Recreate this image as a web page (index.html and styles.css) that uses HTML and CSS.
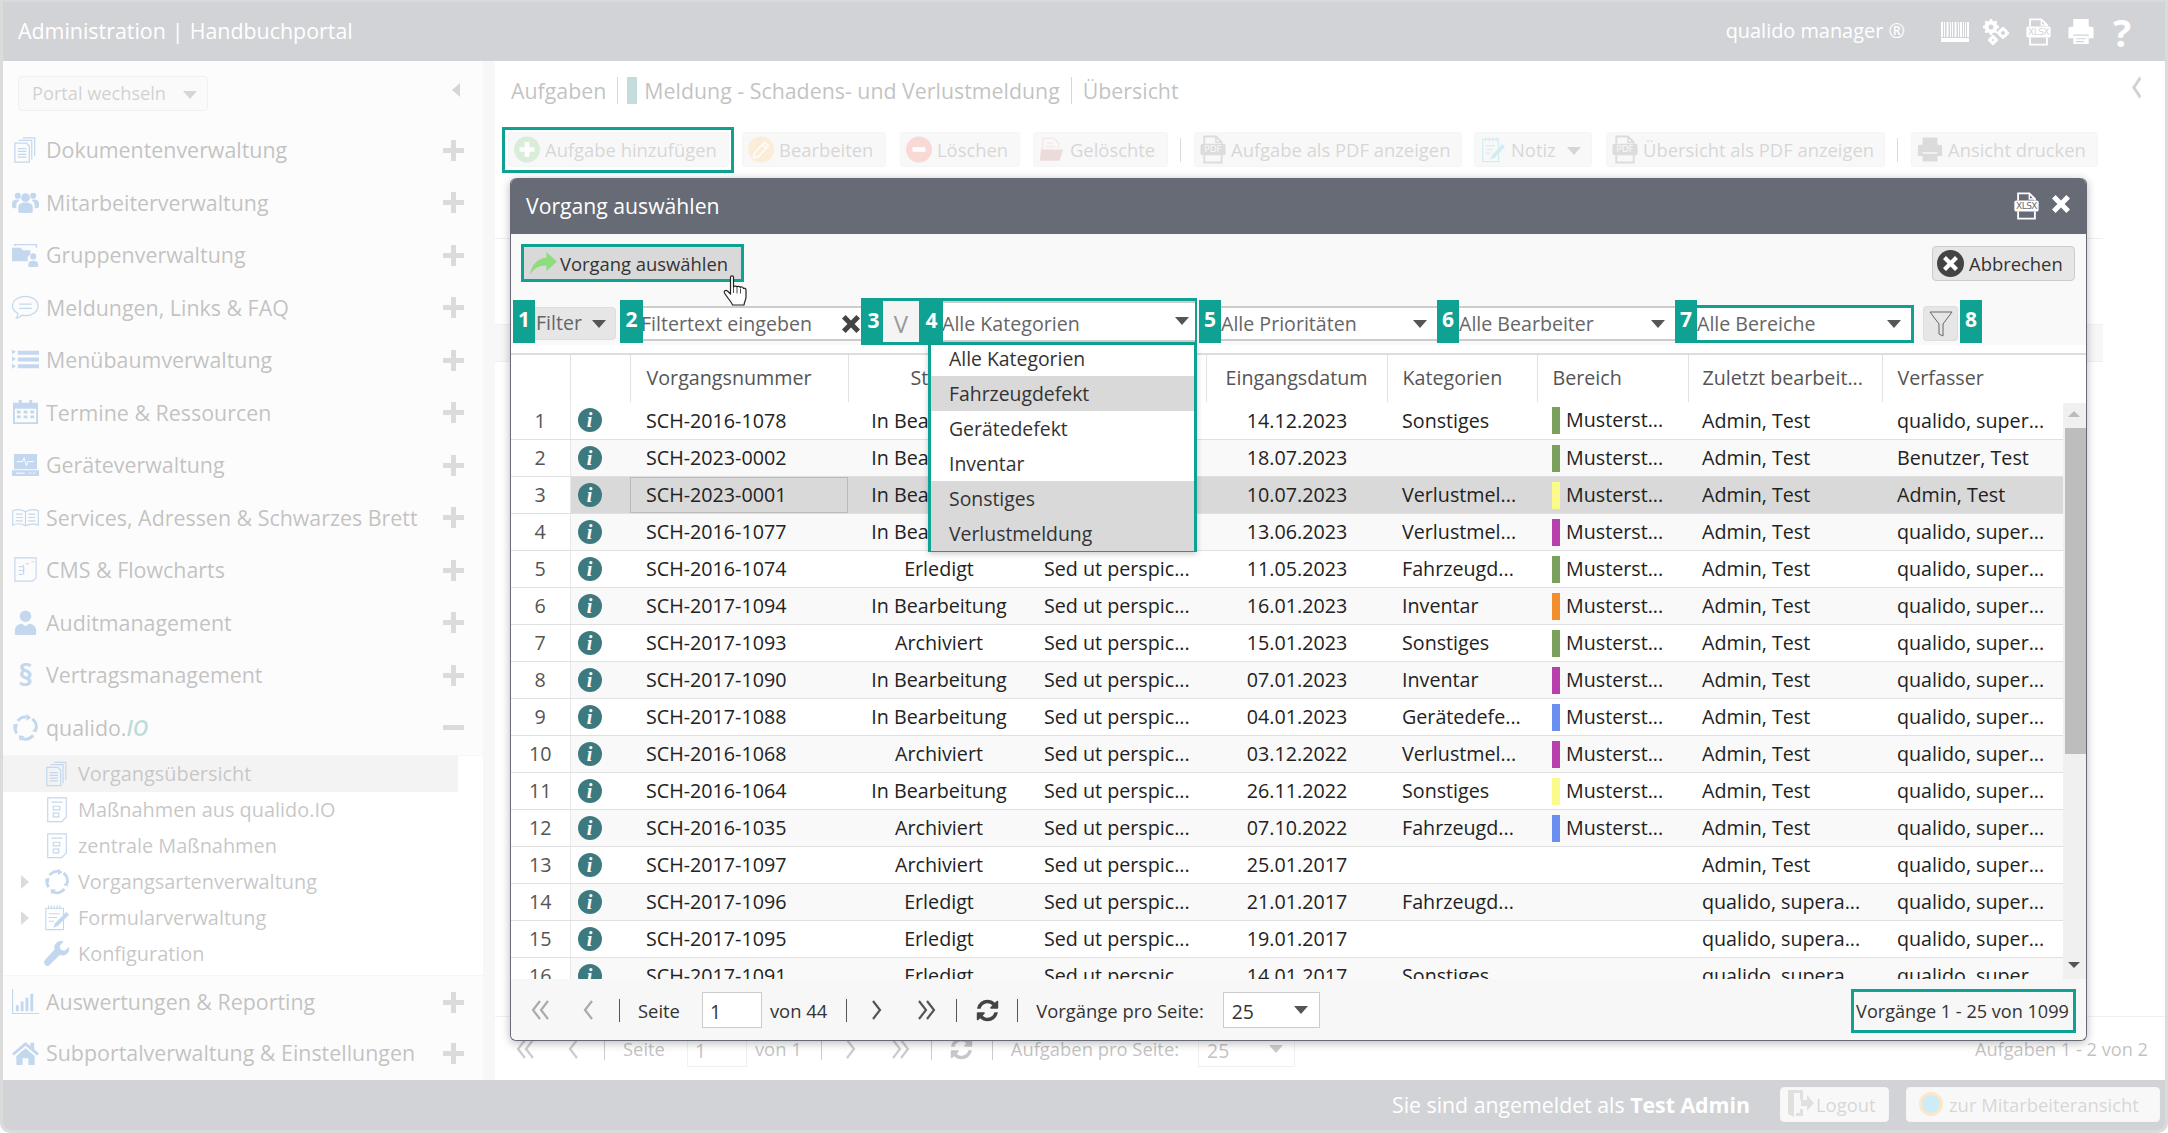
FILE: index.html
```html
<!DOCTYPE html>
<html lang="de">
<head>
<meta charset="utf-8">
<title>Vorgang auswählen</title>
<link rel="stylesheet" href="styles.css">
</head>
<body>
<svg class="defs" width="0" height="0" aria-hidden="true">
<defs>
<symbol id="i-docs" viewBox="0 0 28 28"><g fill="none" stroke="currentColor" stroke-width="1.3"><path d="M11 2h12.500v19"/><path d="M7 4.500h13.500v20"/><path d="M3 7.500h12l3 3v16.500H3z"/><path d="M6 13h9M6 16h9M6 19h9M6 22h9"/></g></symbol>
<symbol id="i-users" viewBox="0 0 28 28"><g fill="currentColor"><circle cx="14" cy="9" r="4.500"/><circle cx="6" cy="7" r="3.200"/><circle cx="22" cy="7" r="3.200"/><path d="M6.500 24v-5c0-3.500 3-5 7.500-5s7.500 1.500 7.500 5v5c-3 1.300-12 1.300-15 0z"/><path d="M0 19v-4c0-2.500 2-4 5.500-4 1 0 1.500.3 2 1-2 1-3 3-3 5v3c-2 0-3.500-.3-4.500-1zM28 19v-4c0-2.500-2-4-5.500-4-1 0-1.500.3-2 1 2 1 3 3 3 5v3c2 0 3.500-.3 4.500-1z"/></g></symbol>
<symbol id="i-group" viewBox="0 0 28 28"><path fill="currentColor" d="M0 7h9l2 2.500h8V14c-3 1-3.500 5-2 7H0zM2 5V3h24v4h-1.500V4.500H4V5z"/><circle cx="22" cy="16" r="3.200" fill="currentColor"/><path fill="currentColor" d="M17 27v-3c0-2.500 2-3.500 5-3.500s5 1 5 3.500v3z"/></symbol>
<symbol id="i-chat" viewBox="0 0 28 28"><g fill="none" stroke="currentColor" stroke-width="1.300"><path d="M14 2.500c7 0 13 4 13 10s-6 10-13 10c-1.500 0-3-.2-4-.5-1.500 1.500-3.500 3-5.500 3 1-1.500 1.500-3 1.500-5-3.500-1.800-5.500-4.500-5.500-7.500 0-6 6-10 13.500-10z"/><path d="M7.500 10.500h13M7.500 15h13"/></g></symbol>
<symbol id="i-list" viewBox="0 0 28 28"><path fill="currentColor" d="M6 5h22v4H6zM6 12h22v4H6zM6 19h22v4H6zM0 3.500l4 2.500-4 2.500zM0 11l4 2.500L0 16zM0 18.500l4 2.500-4 2.500z"/></symbol>
<symbol id="i-cal" viewBox="0 0 28 28"><path fill="currentColor" d="M1 4h26v22H1zM3 10v14h22V10z"/><path fill="currentColor" d="M7 1h3v5H7zM18 1h3v5h-3zM5 12h4v3H5zM12 12h4v3h-4zM19 12h4v3h-4zM5 17h4v3H5zM12 17h4v3h-4zM19 17h4v3h-4z"/></symbol>
<symbol id="i-monitor" viewBox="0 0 28 28"><path fill="currentColor" d="M2 3h24v16H2zM0 20h28v6H0z"/><path fill="none" stroke="#fff" stroke-width="1" d="M5 11h6l1.500-4 2.500 8 1.500-4h6M4 23h9M18 23h2M22 23h2"/></symbol>
<symbol id="i-book" viewBox="0 0 28 28"><g fill="none" stroke="currentColor" stroke-width="1.200"><path d="M.7 7c4-1.500 9-1.500 13.300 1 4.300-2.500 9.300-2.500 13.300-1v15c-4-1.500-9-1.500-13.300.5C9.700 20 4.700 20 .7 22zM14 8v14.500"/><path d="M4 10.500h7M4 14h7M4 17.500h7M17 10.500h7M17 14h7M17 17.500h7"/></g></symbol>
<symbol id="i-flow" viewBox="0 0 28 28"><g fill="none" stroke="currentColor" stroke-width="1.200"><path d="M3 2h22v21l-4 3H3z"/><path d="M7 11h4M7 15h6M7 19h4M14 8h4M20 6h3M12 9v10"/></g></symbol>
<symbol id="i-person" viewBox="0 0 28 28"><circle cx="14" cy="7.500" r="6" fill="currentColor"/><path fill="currentColor" d="M3 27v-5c0-4 3-6 7-7l4 3 4-3c4 1 7 3 7 7v5z"/></symbol>
<symbol id="i-cycle" viewBox="0 0 28 28"><g fill="none" stroke="currentColor" stroke-width="3"><path d="M6 7A11 11 0 0 1 15 3M21 5a11 11 0 0 1 4 11M22 22a11 11 0 0 1-12 3.500M5 20a11 11 0 0 1-2-8"/></g><path fill="currentColor" d="M15 0l5 4-5 3zM26 19l-5-1 4-5zM8 28l-1-6 6 1zM1 11l5-1-1 6z"/></symbol>
<symbol id="i-check" viewBox="0 0 28 28"><g fill="none" stroke="currentColor" stroke-width="1.300"><path d="M4 1.500h20V22l-5 5H4z"/><path d="M8 6h12M10 10.500h7v4h-7zM10 18h6v4h-6z"/></g></symbol>
<symbol id="i-form" viewBox="0 0 28 28"><g fill="none" stroke="currentColor" stroke-width="1.200"><path d="M2 4h19v23H2z"/><path d="M5 1v4M8 1v4M11 1v4M14 1v4M17 1v4M5 10h12M5 14h9M5 18h6"/></g><path fill="currentColor" d="M24 8l3 3-12 12-5 2 2-5z"/></symbol>
<symbol id="i-wrench" viewBox="0 0 28 28"><path fill="currentColor" d="M27 7l-5 4-4-1-1-4 4-5c-4-1.500-8 .5-9.500 4-.6 1.500-.6 3 0 4.500L1 21c-1.500 1.500-1 3.500 0 5s3.500 2 5 .5l11-11c4 1.500 8 0 9.500-3.500.6-1.500.8-3.500.5-5z"/></symbol>
<symbol id="i-chart" viewBox="0 0 28 28"><path fill="currentColor" d="M0 1h1.200v24.800H28V27H0zM4 18h3v6H4zM9 14h3v10H9zM14 10h3v14h-3zM19 6h3v18h-3z"/></symbol>
<symbol id="i-home" viewBox="0 0 28 28"><path fill="currentColor" d="M14 3L0 15l2 2L14 7l12 10 2-2-5-4.300V4h-4v3.300zM4.500 17.500L14 9.500l9.500 8V27H17v-7h-6v7H4.500z"/></symbol>
<symbol id="i-barcode" viewBox="0 0 28 20"><path fill="currentColor" d="M0 0h2v15H0zM3 0h1v15H3zM5.500 0h2v15h-2zM9 0h1v15H9zM11 0h1v15h-1zM13.500 0h2v15h-2zM17 0h1v15h-1zM19 0h2v15h-2zM22 0h1v15h-1zM24 0h1v15h-1zM26 0h2v15h-2zM0 16h28v4H0z"/></symbol>
<symbol id="i-gears" viewBox="0 0 28 26"><g fill="none" stroke="currentColor"><circle cx="9" cy="8" r="4.500" stroke-width="4"/><circle cx="21" cy="14" r="3.500" stroke-width="3"/><circle cx="11" cy="21" r="2.500" stroke-width="3"/><path stroke-width="2.500" d="M9 0v3M9 13v3M1 8h3M14 8h3M3.300 2.300l2 2M12.700 11.700l2 2M3.300 13.700l2-2M12.700 4.300l2-2M21 8v2M21 18v2M15 14h2M25 14h2M11 16v1M11 25v1M6 21h1M15 21h1"/></g></symbol>
<symbol id="i-file" viewBox="0 0 26 30"><path fill="none" stroke="currentColor" stroke-width="2" d="M4 9V1.500h12L22 7.500V9M4 21v7.500h18V21"/><path fill="none" stroke="currentColor" stroke-width="1.500" d="M16 1.500v6h6"/><rect x="0" y="9" width="26" height="12" rx="2" fill="currentColor"/></symbol>
<symbol id="i-printer" viewBox="0 0 28 28"><path fill="currentColor" d="M6 1h16v8H6zM1 11c0-1 1-2 2-2h22c1 0 2 1 2 2v10h-5v-4H6v4H1z"/><path fill="currentColor" d="M6 18.500h16V27H6z"/><path fill="none" stroke="#666b75" stroke-width="1.200" d="M9 21.500h10M9 24.500h8"/></symbol>
<symbol id="i-xbtn" viewBox="0 0 20 20"><path fill="currentColor" d="M0 4l4-4 6 6 6-6 4 4-6 6 6 6-4 4-6-6-6 6-4-4 6-6z"/></symbol>
<symbol id="i-refresh" viewBox="0 0 1792 1792"><path fill="currentColor" d="M1639 1056q0 5-1 7-64 268-268 434.500t-478 166.500q-146 0-282.500-55t-243.500-157l-129 129q-19 19-45 19t-45-19-19-45v-448q0-26 19-45t45-19h448q26 0 45 19t19 45-19 45l-137 137q71 66 161 102t187 36q134 0 250-65t186-179q11-17 53-117 8-23 30-23h192q13 0 22.500 9.500t9.500 22.500zm25-800v448q0 26-19 45t-45 19h-448q-26 0-45-19t-19-45 19-45l138-138q-148-137-349-137-134 0-250 65t-186 179q-11 17-53 117-8 23-30 23h-199q-13 0-22.500-9.500t-9.500-22.500v-7q65-268 270-434.500t480-166.500q146 0 284 55.500t245 156.500l130-129q19-19 45-19t45 19 19 45z"/></symbol>
<symbol id="i-funnel" viewBox="0 0 24 28"><path fill="none" stroke="currentColor" stroke-width="1" d="M1 2h22L14 14v12l-4-2V14z"/></symbol>
<symbol id="i-dbl-l" viewBox="0 0 22 22"><path fill="none" stroke="currentColor" stroke-width="2.200" d="M10 2L3 11l7 9M18 2l-7 9 7 9"/></symbol>
<symbol id="i-l" viewBox="0 0 14 22"><path fill="none" stroke="currentColor" stroke-width="2.200" d="M11 2L4 11l7 9"/></symbol>
<symbol id="i-r" viewBox="0 0 14 22"><path fill="none" stroke="currentColor" stroke-width="2.200" d="M3 2l7 9-7 9"/></symbol>
<symbol id="i-dbl-r" viewBox="0 0 22 22"><path fill="none" stroke="currentColor" stroke-width="2.200" d="M4 2l7 9-7 9M12 2l7 9-7 9"/></symbol>
<symbol id="i-plusc" viewBox="0 0 28 28"><circle cx="14" cy="14" r="14" fill="#5cb85c"/><path fill="#fff" d="M11.500 6h5v5.500H22v5h-5.500V22h-5v-5.500H6v-5h5.500z"/></symbol>
<symbol id="i-pencil" viewBox="0 0 28 28"><circle cx="14" cy="14" r="14" fill="#f7b55a"/><path fill="none" stroke="#fff" stroke-width="1.800" d="M18 6l4 4-11 12-5 1 1-5zM16 9l4 4"/></symbol>
<symbol id="i-minus" viewBox="0 0 28 28"><circle cx="14" cy="14" r="14" fill="#ee5f4f"/><rect x="7" y="11.500" width="14" height="5" fill="#fff"/></symbol>
<symbol id="i-trash" viewBox="0 0 28 28"><path fill="none" stroke="#c9a0a0" stroke-width="1.300" d="M4 23V2h12l5 5v5M8 7h7M8 11h9"/><path fill="#b06a5f" d="M2 14h24l-4 12H1z"/></symbol>
<symbol id="i-note" viewBox="0 0 28 28"><g fill="none" stroke="#38b6c4" stroke-width="1.300"><path d="M3 3h17v24H3zM6 1v4M10 1v4M14 1v4M18 1v4M6 10h10M6 14h8M6 18h5"/></g><path fill="#38b6c4" d="M24 8l3 3-11 12-5 2 2-5z"/></symbol>
<symbol id="i-print2" viewBox="0 0 28 28"><path fill="#666" d="M6 1h16v8H6zM1 11c0-1 1-2 2-2h22c1 0 2 1 2 2v10h-5v-4H6v4H1zM6 18.500h16V27H6z"/></symbol>
<symbol id="i-send" viewBox="0 0 28 24"><path fill="#8fdc7f" d="M17 0l11 10-11 10v-6C9 14 4 17 0 24c1-10 7-17 17-18z"/></symbol>
<symbol id="i-logout" viewBox="0 0 28 30"><path fill="#777" d="M2 1h15v10h-3V4H9l-1 0v24l-6-3zM17 20v7H10v-3h4v-4z"/><path fill="#777" d="M15 11h6V6l7 8-7 8v-5h-6z"/></symbol>
</defs>
</svg>

<div class="app">
  <header class="topbar">
    <div class="topbar-title">Administration | Handbuchportal</div>
    <div class="topbar-right">
      <span class="brand">qualido manager ®</span>
      <svg class="ti ti-barcode"><use href="#i-barcode"/></svg>
      <svg class="ti ti-gears"><use href="#i-gears"/></svg>
      <span class="fileicon fileicon-top"><svg><use href="#i-file"/></svg><b>XLSX</b></span>
      <svg class="ti ti-printer"><use href="#i-printer"/></svg>
      <span class="help">?</span>
    </div>
  </header>

  <div class="main">
    <aside class="sidebar">
      <div class="side-top">
        <div class="portal">Portal wechseln<i class="caret caret-light"></i></div>
        <i class="collapse-left"></i>
      </div>
      <div class="nav"><svg class="nav-ic"><use href="#i-docs"/></svg><span>Dokumentenverwaltung</span><i class="plus"></i></div>
      <div class="nav"><svg class="nav-ic"><use href="#i-users"/></svg><span>Mitarbeiterverwaltung</span><i class="plus"></i></div>
      <div class="nav"><svg class="nav-ic"><use href="#i-group"/></svg><span>Gruppenverwaltung</span><i class="plus"></i></div>
      <div class="nav"><svg class="nav-ic"><use href="#i-chat"/></svg><span>Meldungen, Links &amp; FAQ</span><i class="plus"></i></div>
      <div class="nav"><svg class="nav-ic"><use href="#i-list"/></svg><span>Menübaumverwaltung</span><i class="plus"></i></div>
      <div class="nav"><svg class="nav-ic"><use href="#i-cal"/></svg><span>Termine &amp; Ressourcen</span><i class="plus"></i></div>
      <div class="nav"><svg class="nav-ic"><use href="#i-monitor"/></svg><span>Geräteverwaltung</span><i class="plus"></i></div>
      <div class="nav"><svg class="nav-ic"><use href="#i-book"/></svg><span>Services, Adressen &amp; Schwarzes Brett</span><i class="plus"></i></div>
      <div class="nav"><svg class="nav-ic"><use href="#i-flow"/></svg><span>CMS &amp; Flowcharts</span><i class="plus"></i></div>
      <div class="nav"><svg class="nav-ic"><use href="#i-person"/></svg><span>Auditmanagement</span><i class="plus"></i></div>
      <div class="nav"><b class="nav-ic nav-para">§</b><span>Vertragsmanagement</span><i class="plus"></i></div>
      <div class="nav nav-open"><svg class="nav-ic"><use href="#i-cycle"/></svg><span>qualido.<em>IO</em></span><i class="plus plus-minus"></i></div>
      <div class="subnav">
        <div class="sub sub-active"><svg class="sub-ic"><use href="#i-docs"/></svg><span>Vorgangsübersicht</span></div>
        <div class="sub"><svg class="sub-ic"><use href="#i-check"/></svg><span>Maßnahmen aus qualido.IO</span></div>
        <div class="sub"><svg class="sub-ic"><use href="#i-check"/></svg><span>zentrale Maßnahmen</span></div>
        <div class="sub"><i class="tree-arrow"></i><svg class="sub-ic"><use href="#i-cycle"/></svg><span>Vorgangsartenverwaltung</span></div>
        <div class="sub"><i class="tree-arrow"></i><svg class="sub-ic"><use href="#i-form"/></svg><span>Formularverwaltung</span></div>
        <div class="sub"><svg class="sub-ic"><use href="#i-wrench"/></svg><span>Konfiguration</span></div>
      </div>
      <div class="nav nav-lower"><svg class="nav-ic"><use href="#i-chart"/></svg><span>Auswertungen &amp; Reporting</span><i class="plus"></i></div>
      <div class="nav nav-lower"><svg class="nav-ic"><use href="#i-home"/></svg><span>Subportalverwaltung &amp; Einstellungen</span><i class="plus"></i></div>
    </aside>

    <section class="content">
      <div class="crumbs">
        <span>Aufgaben</span><i class="crumb-sep"></i><i class="crumb-swatch"></i><span>Meldung - Schadens- und Verlustmeldung</span><i class="crumb-sep"></i><span>Übersicht</span>
        <i class="collapse-right"></i>
      </div>
      <div class="toolbar">
        <div class="tb tb-add"><svg class="tb-ic"><use href="#i-plusc"/></svg>Aufgabe hinzufügen</div>
        <div class="tb tb-edit"><svg class="tb-ic"><use href="#i-pencil"/></svg>Bearbeiten</div>
        <div class="tb tb-del"><svg class="tb-ic"><use href="#i-minus"/></svg>Löschen</div>
        <div class="tb tb-trash"><svg class="tb-ic"><use href="#i-trash"/></svg>Gelöschte</div>
        <i class="tb-sep"></i>
        <div class="tb tb-pdf1"><span class="fileicon fileicon-pdf"><svg><use href="#i-file"/></svg><b>PDF</b></span>Aufgabe als PDF anzeigen</div>
        <div class="tb tb-note"><svg class="tb-ic"><use href="#i-note"/></svg>Notiz<i class="caret caret-light caret-note"></i></div>
        <div class="tb tb-pdf2"><span class="fileicon fileicon-pdf"><svg><use href="#i-file"/></svg><b>PDF</b></span>Übersicht als PDF anzeigen</div>
        <i class="tb-sep"></i>
        <div class="tb tb-print"><svg class="tb-ic"><use href="#i-print2"/></svg>Ansicht drucken</div>
      </div>
      <div class="bgpanel">
        <div class="bg-r1"></div>
        <div class="bg-r2"></div>
        <div class="bg-r3"></div>
      </div>
      <div class="pager pager-bg">
        <span class="slot s47"><svg class="pi"><use href="#i-dbl-l"/></svg></span>
        <span class="slot s47"><svg class="pi pi-n"><use href="#i-l"/></svg></span>
        <i class="sep sep-a"></i><span>Seite</span><span class="pg-input">1</span><span class="von">von 1</span>
        <i class="sep sep-b"></i>
        <span class="slot s49"><svg class="pi pi-n"><use href="#i-r"/></svg></span>
        <span class="slot s49"><svg class="pi"><use href="#i-dbl-r"/></svg></span>
        <i class="sep sep-c"></i>
        <span class="slot s60"><svg class="pi-ref"><use href="#i-refresh"/></svg></span>
        <i class="sep sep-d"></i>
        <span>Aufgaben pro Seite:</span><span class="pg-sel">25<i class="caret"></i></span>
        <span class="pg-total">Aufgaben 1 - 2 von 2</span>
      </div>
    </section>
  </div>

  <footer class="footbar">
    <span class="who">Sie sind angemeldet als <b>Test Admin</b></span>
    <div class="fbtn fbtn-logout"><svg class="fb-ic"><use href="#i-logout"/></svg>Logout</div>
    <div class="fbtn fbtn-emp"><i class="ring"></i>zur Mitarbeiteransicht</div>
  </footer>
</div>

<div class="dim"></div>
<div class="mark mark-add"></div>

<div class="modal">
  <div class="m-head">
    <span class="m-title">Vorgang auswählen</span>
    <span class="fileicon fileicon-modal"><svg><use href="#i-file"/></svg><b>XLSX</b></span>
    <svg class="m-close"><use href="#i-xbtn"/></svg>
  </div>
  <div class="m-tools">
    <div class="btn-pick"><svg class="pick-ic"><use href="#i-send"/></svg>Vorgang auswählen</div>
    <div class="btn-cancel"><span class="cancel-ic"><svg><use href="#i-xbtn"/></svg></span>Abbrechen</div>
  </div>
  <div class="m-filter">
    <span class="num">1</span>
    <div class="f-btn">Filter<i class="caret"></i></div>
    <span class="num num-2">2</span>
    <div class="f-input">Filtertext eingeben<svg class="f-x"><use href="#i-xbtn"/></svg></div>
    <div class="f-group">
      <span class="num num-in">3</span>
      <div class="f-v">V</div>
      <span class="num num-in num-4">4</span>
      <div class="f-sel f-sel-in">Alle Kategorien<i class="caret"></i></div>
    </div>
    <span class="num num-5">5</span>
    <div class="f-sel f-216">Alle Prioritäten<i class="caret"></i></div>
    <span class="num">6</span>
    <div class="f-sel f-216">Alle Bearbeiter<i class="caret"></i></div>
    <span class="num">7</span>
    <div class="f-sel f-mark">Alle Bereiche<i class="caret"></i></div>
    <div class="f-funnel"><svg><use href="#i-funnel"/></svg></div>
    <span class="num num-8">8</span>
    <ul class="dropdown">
      <li>Alle Kategorien</li>
      <li class="on">Fahrzeugdefekt</li>
      <li>Gerätedefekt</li>
      <li>Inventar</li>
      <li class="on">Sonstiges</li>
      <li class="on">Verlustmeldung</li>
    </ul>
    <svg class="cursor" viewBox="0 0 26 32"><path fill="#fff" stroke="#222" stroke-width="1.200" stroke-linejoin="round" d="M8 2c0-1.500 3-1.500 3 0v10c0-1 3-1.500 3.500 0 .3-1 3-1 3.300.5.500-.8 3-.8 3.200 1 .500-.5 2.500-.3 2.500 1.500v7c0 3-1.500 4-2 8H10c-1-3-5-7-8-12-1-2 1-3.500 3-2l3 3z"/><path fill="none" stroke="#222" stroke-width=".8" d="M11 12v6M14.500 12.500v6M18 13.500v5"/></svg>
  </div>
  <div class="m-table">
    <div class="t-scroll">
      <table class="grid">
        <colgroup><col class="w59"><col class="w60"><col class="w218"><col class="w185"><col class="w173"><col class="w181"><col class="w150"><col class="w151"><col class="w194"><col class="w181"></colgroup>
        <thead><tr><th></th><th></th><th>Vorgangsnummer</th><th class="ctr">Status</th><th>Betreff</th><th class="ctr">Eingangsdatum</th><th>Kategorien</th><th>Bereich</th><th>Zuletzt bearbeit...</th><th>Verfasser</th></tr></thead>
        <tbody>
<tr><td>1</td><td><i class="info">i</i></td><td>SCH-2016-1078</td><td>In Bearbeitung</td><td>Sed ut perspic...</td><td>14.12.2023</td><td>Sonstiges</td><td><i class="bar b-green"></i>Musterst...</td><td>Admin, Test</td><td>qualido, super...</td></tr>
<tr><td>2</td><td><i class="info">i</i></td><td>SCH-2023-0002</td><td>In Bearbeitung</td><td>Sed ut perspic...</td><td>18.07.2023</td><td></td><td><i class="bar b-green"></i>Musterst...</td><td>Admin, Test</td><td>Benutzer, Test</td></tr>
<tr class="sel"><td>3</td><td><i class="info">i</i></td><td class="cellfocus">SCH-2023-0001</td><td>In Bearbeitung</td><td>Sed ut perspic...</td><td>10.07.2023</td><td>Verlustmel...</td><td><i class="bar b-yellow"></i>Musterst...</td><td>Admin, Test</td><td>Admin, Test</td></tr>
<tr><td>4</td><td><i class="info">i</i></td><td>SCH-2016-1077</td><td>In Bearbeitung</td><td>Sed ut perspic...</td><td>13.06.2023</td><td>Verlustmel...</td><td><i class="bar b-purple"></i>Musterst...</td><td>Admin, Test</td><td>qualido, super...</td></tr>
<tr><td>5</td><td><i class="info">i</i></td><td>SCH-2016-1074</td><td>Erledigt</td><td>Sed ut perspic...</td><td>11.05.2023</td><td>Fahrzeugd...</td><td><i class="bar b-green"></i>Musterst...</td><td>Admin, Test</td><td>qualido, super...</td></tr>
<tr><td>6</td><td><i class="info">i</i></td><td>SCH-2017-1094</td><td>In Bearbeitung</td><td>Sed ut perspic...</td><td>16.01.2023</td><td>Inventar</td><td><i class="bar b-orange"></i>Musterst...</td><td>Admin, Test</td><td>qualido, super...</td></tr>
<tr><td>7</td><td><i class="info">i</i></td><td>SCH-2017-1093</td><td>Archiviert</td><td>Sed ut perspic...</td><td>15.01.2023</td><td>Sonstiges</td><td><i class="bar b-green"></i>Musterst...</td><td>Admin, Test</td><td>qualido, super...</td></tr>
<tr><td>8</td><td><i class="info">i</i></td><td>SCH-2017-1090</td><td>In Bearbeitung</td><td>Sed ut perspic...</td><td>07.01.2023</td><td>Inventar</td><td><i class="bar b-purple"></i>Musterst...</td><td>Admin, Test</td><td>qualido, super...</td></tr>
<tr><td>9</td><td><i class="info">i</i></td><td>SCH-2017-1088</td><td>In Bearbeitung</td><td>Sed ut perspic...</td><td>04.01.2023</td><td>Gerätedefe...</td><td><i class="bar b-blue"></i>Musterst...</td><td>Admin, Test</td><td>qualido, super...</td></tr>
<tr><td>10</td><td><i class="info">i</i></td><td>SCH-2016-1068</td><td>Archiviert</td><td>Sed ut perspic...</td><td>03.12.2022</td><td>Verlustmel...</td><td><i class="bar b-purple"></i>Musterst...</td><td>Admin, Test</td><td>qualido, super...</td></tr>
<tr><td>11</td><td><i class="info">i</i></td><td>SCH-2016-1064</td><td>In Bearbeitung</td><td>Sed ut perspic...</td><td>26.11.2022</td><td>Sonstiges</td><td><i class="bar b-yellow"></i>Musterst...</td><td>Admin, Test</td><td>qualido, super...</td></tr>
<tr><td>12</td><td><i class="info">i</i></td><td>SCH-2016-1035</td><td>Archiviert</td><td>Sed ut perspic...</td><td>07.10.2022</td><td>Fahrzeugd...</td><td><i class="bar b-blue"></i>Musterst...</td><td>Admin, Test</td><td>qualido, super...</td></tr>
<tr><td>13</td><td><i class="info">i</i></td><td>SCH-2017-1097</td><td>Archiviert</td><td>Sed ut perspic...</td><td>25.01.2017</td><td></td><td></td><td>Admin, Test</td><td>qualido, super...</td></tr>
<tr><td>14</td><td><i class="info">i</i></td><td>SCH-2017-1096</td><td>Erledigt</td><td>Sed ut perspic...</td><td>21.01.2017</td><td>Fahrzeugd...</td><td></td><td>qualido, supera...</td><td>qualido, super...</td></tr>
<tr><td>15</td><td><i class="info">i</i></td><td>SCH-2017-1095</td><td>Erledigt</td><td>Sed ut perspic...</td><td>19.01.2017</td><td></td><td></td><td>qualido, supera...</td><td>qualido, super...</td></tr>
<tr><td>16</td><td><i class="info">i</i></td><td>SCH-2017-1091</td><td>Erledigt</td><td>Sed ut perspic...</td><td>14.01.2017</td><td>Sonstiges</td><td></td><td>qualido, supera...</td><td>qualido, super...</td></tr>
        </tbody>
      </table>
    </div>
    <div class="scrollbar">
      <i class="sb-up"></i>
      <div class="sb-track"><div class="sb-thumb"></div></div>
      <i class="sb-down"></i>
    </div>
  </div>
  <div class="pager pager-m">
    <span class="slot s47"><svg class="pi pi-off"><use href="#i-dbl-l"/></svg></span>
    <span class="slot s47"><svg class="pi pi-n pi-off"><use href="#i-l"/></svg></span>
    <i class="sep sep-a"></i><span>Seite</span><span class="pg-input">1</span><span class="von">von 44</span>
    <i class="sep sep-b"></i>
    <span class="slot s49"><svg class="pi pi-n"><use href="#i-r"/></svg></span>
    <span class="slot s49"><svg class="pi"><use href="#i-dbl-r"/></svg></span>
    <i class="sep sep-c"></i>
    <span class="slot s60"><svg class="pi-ref"><use href="#i-refresh"/></svg></span>
    <i class="sep sep-d"></i>
    <span>Vorgänge pro Seite:</span><span class="pg-sel">25<i class="caret"></i></span>
    <span class="pg-total pg-total-mark">Vorgänge 1 - 25 von 1099</span>
  </div>
</div>
</body>
</html>
```
FILE: styles.css
```css
* { box-sizing: border-box; }
html, body { margin: 0; height: 100%; overflow: hidden; background: #fff; }
body { font-family: "Open Sans", "Liberation Sans", sans-serif; color: #333; position: relative; width: 2168px; height: 1133px; }
.defs { position: absolute; }
i { font-style: normal; display: inline-block; }

.app { height: 1133px; display: flex; flex-direction: column; border: 3px solid #888; border-top-width: 2px; border-radius: 0 0 10px 10px; overflow: hidden; background: #fff; }

.topbar { height: 59px; background: #666b75; color: #fff; display: flex; align-items: center; justify-content: space-between; flex: none; padding: 0 0 0 15px; }
.topbar-title { font-size: 21.4px; padding-bottom: 3px; word-spacing: .5px; }
.topbar-right { display: flex; align-items: center; margin-right: 0; height: 100%; }
.brand { font-size: 19.9px; margin-right: 36px; padding-bottom: 2px; }
.ti { color: #fff; display: block; flex: none; }
.ti-barcode { width: 28px; height: 20px; margin-right: 13px; }
.ti-gears { width: 28px; height: 26px; margin-right: 16px; }
.ti-printer { width: 28px; height: 27px; margin: 0 18px 0 16px; }
.help { font-size: 38px; font-weight: 700; line-height: 1; margin-right: 31px; width: 21px; }
.fileicon { position: relative; display: block; flex: none; width: 25px; height: 28px; color: #fff; }
.fileicon svg { width: 100%; height: 100%; display: block; }
.fileicon b { position: absolute; left: 0; right: 0; top: 9px; font-size: 9px; line-height: 10px; text-align: center; font-weight: 400; color: #666b75; font-family: "DejaVu Sans", sans-serif; letter-spacing: -.5px; }
.fileicon-modal { position: absolute; left: 1503px; top: 14px; }
.fileicon-pdf { width: 26px; height: 29px; margin-right: 5px; color: #8a8a8a; }
.fileicon-pdf b { color: #e8e8e8; top: 9px; letter-spacing: 0; }

.main { flex: 1; display: flex; min-height: 0; }
.sidebar { flex: none; background: #f5f5f5; border-right: 12px solid #e4e4e4; width: 492px; }
.side-top { height: 62.5px; position: relative; padding: 15px 0 0 15px; }
.portal { width: 190px; height: 35px; border: 1px solid #ccc; border-radius: 4px; background: #eee; color: #666; font-size: 18.2px; line-height: 33px; padding-left: 13px; position: relative; }
.portal .caret { position: absolute; right: 10px; top: 14px; }
.collapse-left { position: absolute; left: 449px; top: 22px; border: 7px solid transparent; border-right: 8px solid #777; border-left: 0; border-top-width: 7px; }
.nav { height: 52.5px; display: flex; align-items: center; padding-left: 9px; font-size: 21.4px; color: #333; position: relative; }
.nav-ic { width: 27px; height: 27px; color: #377dc9; flex: none; margin-right: 7px; display: block; }
.nav-para { font-size: 30px; line-height: 27px; text-align: center; font-weight: 700; font-style: normal; }
.nav em { color: #1b8a85; font-style: italic; font-weight: 600; }
.plus { position: absolute; left: 440px; top: 16px; width: 21px; height: 21px; background: linear-gradient(#888, #888) center / 21px 5px no-repeat, linear-gradient(#888, #888) center / 5px 21px no-repeat; }
.plus-minus { background: linear-gradient(#888, #888) center / 21px 5px no-repeat; }
.nav-lower { height: 51px; }
.nav-open { height: 54.5px; border-bottom: 1px solid #e4e4e4; }
.subnav { background: #fff; border-bottom: 1px solid #e4e4e4; padding-bottom: 3px; }
.sub { height: 36px; width: 455px; display: flex; align-items: center; padding-left: 41px; font-size: 19.9px; color: #444; position: relative; }
.sub-active { background: #d7d7d7; }
.sub-ic { width: 26px; height: 27px; color: #377dc9; margin-right: 8px; flex: none; display: block; }
.tree-arrow { position: absolute; left: 18px; top: 11px; border: 7px solid transparent; border-left: 8px solid #888; border-right: 0; }

.content { flex: 1; min-width: 0; display: flex; flex-direction: column; }
.crumbs { height: 64px; flex: none; padding: 0 0 6px 16px; display: flex; align-items: center; font-size: 21.35px; color: #333; position: relative; }
.crumb-sep { width: 1px; height: 27px; background: #c7544a; margin: 0 11px; }
.crumb-sep + .crumb-swatch { margin-left: -2px; }
.crumb-swatch { width: 10px; height: 27px; background: #3a8a88; margin-right: 7px; }
.collapse-right { position: absolute; left: 1638px; top: 20px; width: 13px; height: 13px; border-left: 3px solid #666; border-bottom: 3px solid #666; transform: rotate(45deg) skew(12deg, 12deg); }
.toolbar { height: 47px; flex: none; display: flex; align-items: center; position: relative; padding-top: 2px; }
.tb { height: 35px; border: 1px solid #ddd; border-radius: 3px; background: #e8e8e8; color: #777; font-size: 18.4px; display: flex; align-items: center; padding-left: 5px; flex: none; white-space: nowrap; }
.tb-ic { width: 26px; height: 27px; margin-right: 5px; flex: none; display: block; opacity: .75; }
.tb-add { margin-left: 13px; width: 221px; }
.tb-edit { margin-left: 13px; width: 144px; }
.tb-del { margin-left: 14px; width: 120px; }
.tb-trash { margin-left: 13px; width: 135px; }
.tb-sep { width: 1px; height: 24px; background: #888; margin: 0 13px 0 12px; flex: none; }
.tb-pdf1 { width: 268px; }
.tb-note { margin-left: 12px; width: 118px; position: relative; }
.tb-pdf2 { margin-left: 14px; width: 279px; }
.tb-print { width: 187px; }
.caret-note { position: absolute; right: 10px; top: 14px; }
.bgpanel { flex: 1; min-height: 0; border-bottom: 1px solid #ccc; padding-right: 62px; }
.bg-r1 { height: 67px; border-bottom: 1px solid #ccc; }
.bg-r2 { height: 86px; border-bottom: 1px solid #ccc; }
.bg-r3 { height: 37px; background: #e4e4e4; margin-right: 0; border-bottom: 1px solid #ccc; }

.pager { display: flex; align-items: center; font-size: 18.4px; color: #333; flex: none; position: relative; white-space: nowrap; }
.pager-bg { height: 63px; padding: 0 0 0 7px; }
.pager-m { height: 61px; padding: 1px 0 0 6px; background: #f7f7f7; border-radius: 0 0 6px 6px; }
.slot { display: flex; justify-content: center; align-items: center; flex: none; height: 40px; }
.s47 { width: 47px; } .s49 { width: 49px; } .s60 { width: 60px; }
.pi { width: 22px; height: 22px; color: #555; display: block; }
.pi-n { width: 14px; }
.pi-off { color: #aaa; }
.pi-ref { width: 25px; height: 25px; color: #444; display: block; }
.sep { width: 1px; height: 23px; background: #555; flex: none; }
.sep-a { margin: 0 18px 0 8px; }
.sep-b { margin: 0 5px 0 19px; }
.sep-c { margin: 0 0 0 6px; }
.sep-d { margin: 0 18px 0 0; }
.pg-input { width: 60px; height: 36px; border: 1px solid #ccc; background: #fff; margin-left: 22px; line-height: 38px; padding-left: 7px; font-size: 19.4px; flex: none; }
.von { margin-left: 8px; }
.pg-sel { width: 97px; height: 36px; border: 1px solid #ccc; background: #fff; margin-left: 19px; line-height: 38px; padding-left: 8px; font-size: 19.4px; position: relative; flex: none; }
.pg-sel .caret { position: absolute; right: 11px; top: 13px; }
.pg-total { position: absolute; right: 17px; top: 50%; transform: translateY(-50%); font-size: 18.2px; }
.pg-total-mark { right: 10px; top: 10px; transform: none; height: 44px; width: 225px; border: 3px solid #0fa292; display: flex; align-items: center; justify-content: center; padding-right: 2px; font-size: 18.1px; }

.caret { width: 0; height: 0; border: 7px solid transparent; border-top: 8px solid #555; border-bottom: 0; display: inline-block; }
.caret-light { border-top-color: #777; }

.footbar { height: 50px; flex: none; background: #666b75; color: #fff; display: flex; align-items: center; justify-content: flex-end; padding: 0 5px 2px 0; }
.who { font-size: 21.3px; margin-right: 30px; }
.who b { font-weight: 700; }
.fbtn { height: 35px; background: #e8e8e8; border: 1px solid #ddd; border-radius: 4px; color: #777; font-size: 18.4px; display: flex; align-items: center; padding-left: 5px; }
.fbtn-logout { width: 109px; }
.fbtn-emp { width: 254px; margin-left: 17px; }
.fb-ic { width: 28px; height: 30px; margin-right: 2px; flex: none; display: block; opacity: .7; }
.ring { width: 24px; height: 24px; border-radius: 50%; background: #5bc0de; border: 3px solid #f0ad4e; margin: 0 6px 0 7px; flex: none; }

.dim { position: absolute; inset: 0; background: rgba(255,255,255,.7); z-index: 10; }
.mark { position: absolute; z-index: 15; border: 3px solid #0fa292; }
.mark-add { left: 502px; top: 127px; width: 232px; height: 46px; }

.modal { position: absolute; z-index: 20; left: 510px; top: 178px; width: 1577px; height: 863px; background: #fff; border: 1px solid #666b75; border-top: 0; border-radius: 6px; box-shadow: 0 2px 10px rgba(0,0,0,.28); display: flex; flex-direction: column; }
.m-head { height: 56px; flex: none; background: #666b75; border-radius: 6px 6px 0 0; color: #fff; display: flex; align-items: center; padding: 0 0 2px 15px; position: relative; }
.m-title { font-size: 21.2px; }
.m-close { position: absolute; left: 1541px; top: 17px; width: 18px; height: 18px; color: #fff; }
.m-tools { height: 64px; flex: none; background: #f9f9f9; position: relative; padding: 10px 0 0 10px; display: flex; justify-content: space-between; align-items: flex-start; }
.btn-pick { width: 223px; height: 38px; border: 3px solid #0fa292; background: #d9d9d9; font-size: 18.4px; color: #333; display: flex; align-items: center; padding-left: 6px; }
.pick-ic { width: 27px; height: 23px; margin-right: 3px; flex: none; display: block; }
.btn-cancel { width: 143px; height: 35px; margin: 2px 11px 0 0; border: 1px solid #ccc; border-radius: 4px; background: #e6e6e6; font-size: 18.4px; color: #333; display: flex; align-items: center; padding-left: 4px; }
.cancel-ic { width: 27px; height: 27px; border-radius: 50%; background: #444; display: flex; align-items: center; justify-content: center; margin-right: 5px; flex: none; }
.cancel-ic svg { width: 15px; height: 15px; color: #fff; display: block; }

.m-filter { height: 47px; flex: none; background: #f9f9f9; position: relative; display: flex; align-items: flex-start; padding-left: 2px; font-size: 19.6px; color: #666; }
.num { width: 22px; height: 43px; margin-top: 2px; background: #0fa292; color: #fff; font-weight: 700; font-size: 21px; line-height: 38px; text-align: center; flex: none; position: relative; z-index: 2; }
.num-2 { margin-left: 4px; width: 23px; }
.num-5 { margin-left: 2px; }
.num-8 { margin-left: 2px; }
.f-btn { width: 81px; height: 33px; margin-top: 9px; background: #e6e6e6; border-radius: 0 4px 4px 0; border: 1px solid #ddd; padding-left: 0; line-height: 30px; position: relative; flex: none; }
.f-btn .caret { position: absolute; right: 9px; top: 12px; }
.f-input { width: 218px; height: 35px; margin-top: 8px; background: #fff; border-top: 2px solid #ccc; border-bottom: 2px solid #ccc; line-height: 31px; text-indent: -2px; position: relative; flex: none; white-space: nowrap; }
.f-x { position: absolute; right: 1px; top: 7px; width: 18px; height: 18px; color: #444; }
.f-group { width: 336px; height: 47px; border: 3px solid #0fa292; display: flex; flex: none; position: relative; z-index: 3; background: #0fa292; }
.num-in { margin: 0; height: 41px; width: 19px; font-size: 21px; }
.num-4 { width: 23px; }
.f-v { width: 36px; height: 41px; background: #f4f4f4; color: #999; font-size: 24px; text-align: center; line-height: 46px; margin-right: 1px; flex: none; }
.f-sel { height: 35px; margin-top: 8px; background: #fff; border-top: 2px solid #ccc; border-bottom: 2px solid #ccc; line-height: 31px; position: relative; flex: none; white-space: nowrap; }
.f-sel .caret { position: absolute; right: 10px; top: 12px; }
.f-sel-in { width: 252px; height: 41px; margin: 0; line-height: 42px; text-indent: -1px; }
.f-sel-in .caret { top: 14px; right: 6px; }
.f-216 { width: 216px; }
.f-mark { width: 217px; height: 38px; margin-top: 7px; border: 3px solid #0fa292; border-left: 0; line-height: 32px; }
.f-funnel { width: 35px; height: 35px; margin: 8px 0 0 9px; background: #e6e6e6; border: 1px solid #ddd; border-radius: 3px; display: flex; align-items: center; justify-content: center; flex: none; color: #666; }
.f-funnel svg { width: 24px; height: 28px; display: block; }
.dropdown { position: absolute; z-index: 5; left: 417px; top: 47px; width: 269px; height: 207px; margin: 0; padding: 0; list-style: none; background: #fff; border: 3px solid #0fa292; border-top: 0; color: #333; font-size: 19.4px; box-shadow: 0 2px 6px rgba(0,0,0,.2); }
.dropdown li { height: 35px; line-height: 35px; padding-left: 18px; white-space: nowrap; }
.dropdown li:first-child { height: 31px; line-height: 28px; }
.dropdown .on { background: #d9d9d9; }
.cursor { position: absolute; z-index: 6; left: 211px; top: -23px; width: 27px; height: 32px; }

.m-table { flex: 1; min-height: 0; display: flex; background: #fff; margin-top: 8px; border-top: 2px solid #ddd; position: relative; }
.t-scroll { flex: 1; min-width: 0; overflow: hidden; }
.grid { width: 1552px; table-layout: fixed; border-collapse: collapse; font-size: 19.7px; color: #222; }
.w59 { width: 59px; } .w60 { width: 60px; } .w218 { width: 218px; } .w185 { width: 185px; } .w173 { width: 173px; } .w181 { width: 181px; } .w150 { width: 150px; } .w151 { width: 151px; } .w194 { width: 194px; }
.grid th { height: 47px; font-weight: 400; color: #555; text-align: left; padding: 0 0 3px 15px; border-left: 1px solid #e2e2e2; white-space: nowrap; overflow: hidden; }
.grid th:first-child { border-left: 0; }
.grid th.ctr { text-align: center; padding: 0 0 3px; }
.grid th:nth-child(3), .grid td:nth-child(3) { padding-left: 16px; }
.grid th:nth-child(4) { padding-right: 3px; }
.grid th:nth-child(9) { padding-left: 14px; }
.grid td { height: 37px; padding: 0 0 0 15px; border-bottom: 1px solid #e0e0e0; white-space: nowrap; overflow: hidden; vertical-align: middle; }
.grid td:nth-child(1) { text-align: center; padding: 0; color: #555; border-right: 1px solid #e8e8e8; background: #fff; }
.grid td:nth-child(2) { padding: 0 0 0 7px; }
.grid td:nth-child(4) { text-align: center; padding: 0 3px 0 0; }
.grid td:nth-child(5) { padding-left: 11px; }
.grid td:nth-child(6) { text-align: center; padding: 0 0 0 1px; }
.grid td:nth-child(9) { padding-left: 14px; }
.grid tbody tr:nth-child(even) { background: #f9f9f9; }
.grid tbody tr.sel { background: #d9d9d9; }
.grid td.cellfocus { box-shadow: inset 0 0 0 1px #bbb; }
.info { display: block; width: 24px; height: 24px; border-radius: 50%; background: #3d7a80; color: #fff; font-family: "Liberation Serif", serif; font-style: italic; font-weight: 700; font-size: 20px; line-height: 24px; text-align: center; }
.bar { display: inline-block; width: 8px; height: 27px; margin-right: 6px; vertical-align: -7px; }
.b-green { background: #7ba05b; } .b-yellow { background: #fbfb8c; } .b-purple { background: #b840ad; } .b-orange { background: #f28e2e; } .b-blue { background: #6a8ff0; }
.scrollbar { width: 23px; flex: none; margin-top: 48px; background: #f0f0f0; display: flex; flex-direction: column; position: relative; }
.sb-up { height: 25px; flex: none; position: relative; }
.sb-up::after { content: ""; position: absolute; left: 5px; top: 8px; border: 6px solid transparent; border-bottom: 6px solid #bbb; border-top: 0; }
.sb-track { flex: 1; }
.sb-thumb { height: 326px; background: #bdbdbd; margin-left: 2px; }
.sb-down { height: 20px; flex: none; position: relative; }
.sb-down::after { content: ""; position: absolute; left: 5px; top: 3px; border: 6px solid transparent; border-top: 6px solid #555; border-bottom: 0; }
```
